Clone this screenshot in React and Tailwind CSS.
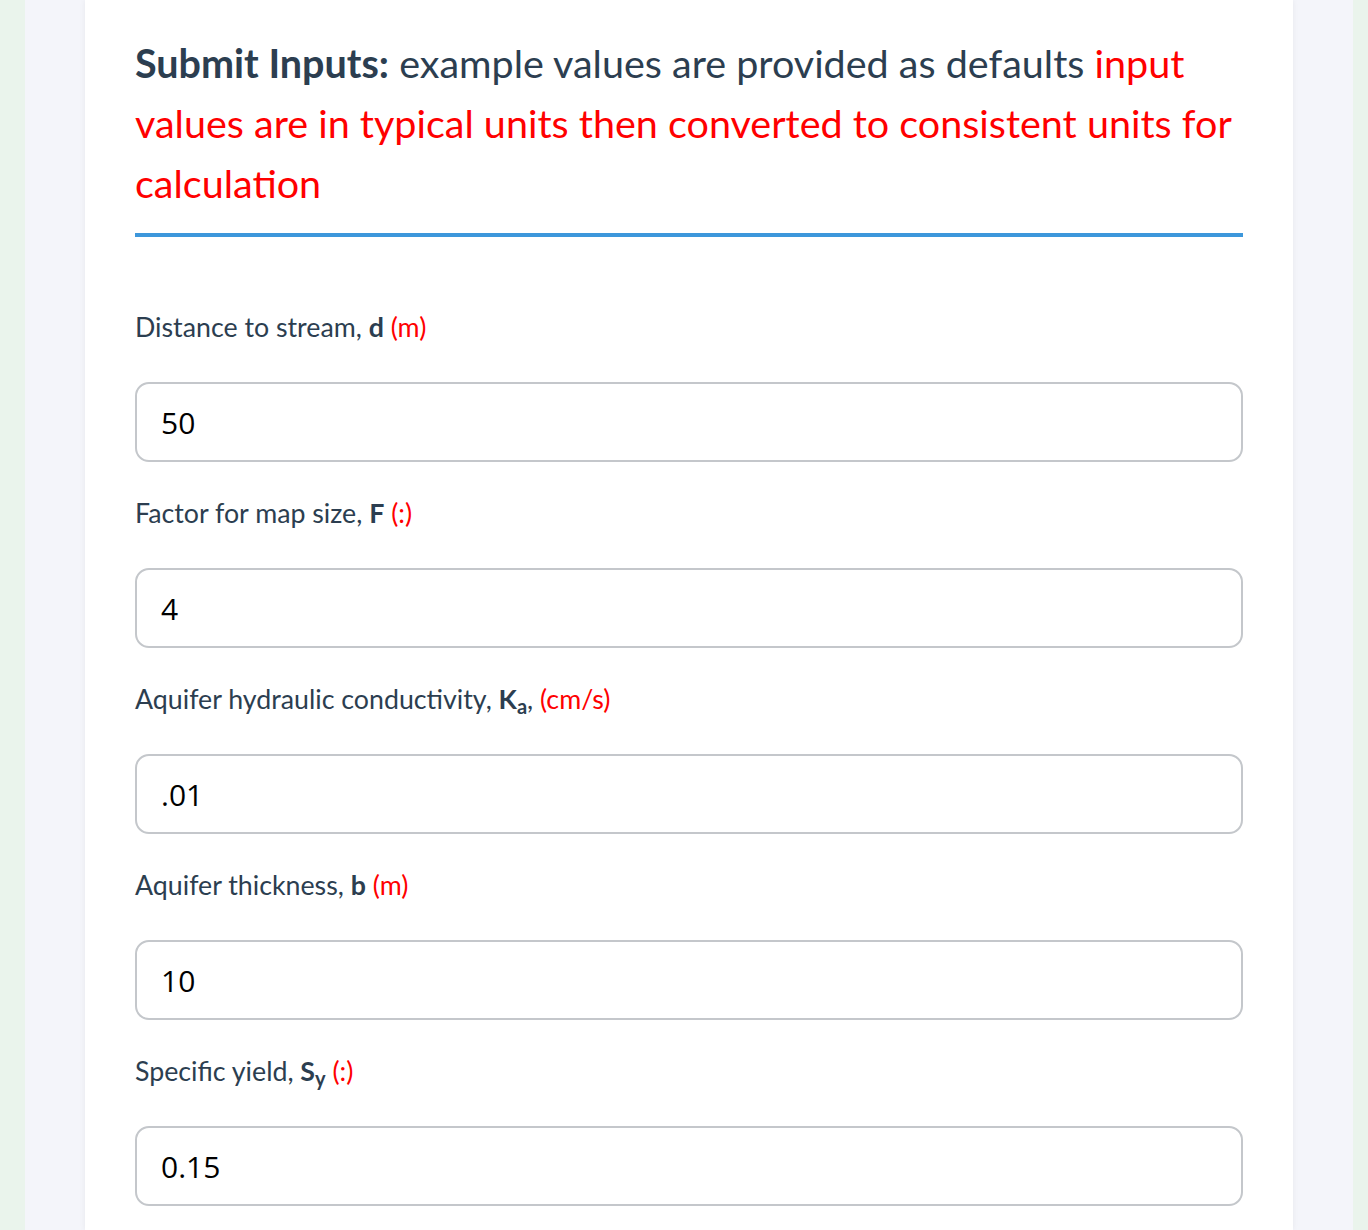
import React from 'react';

const fields = [
  { label: 'Distance to stream, ', sym: 'd', unit: '(m)', value: '50' },
  { label: 'Factor for map size, ', sym: 'F', unit: '(:)', value: '4' },
  { label: 'Aquifer hydraulic conductivity, ', sym: 'K', sub: 'a', comma: true, unit: '(cm/s)', value: '.01' },
  { label: 'Aquifer thickness, ', sym: 'b', unit: '(m)', value: '10' },
  { label: 'Specific yield, ', sym: 'S', sub: 'y', unit: '(:)', value: '0.15' },
];

const Field = ({ f }) => (
  <div className="mb-[33px]">
    <label className="block text-[26.75px] leading-[36px] text-[#2c3e50]">
      {f.label}
      <b className="font-bold">
        {f.sym}
        {f.sub && <sub>{f.sub}</sub>}
      </b>
      {f.comma ? ', ' : ' '}
      <span className="text-[#ff0000]">{f.unit}</span>
    </label>
    <input
      type="text"
      defaultValue={f.value}
      className="mt-[37px] block w-full h-[80px] rounded-[14px] border-2 border-[#c4c7cb] bg-white px-[24px] text-[30px] text-black font-['Open_Sans',sans-serif] outline-none"
    />
  </div>
);

export default function App() {
  return (
    <div className="min-h-[1230px] flex bg-[#eaf4ec] font-['Lato',sans-serif]">
      <div className="ml-[25px] mr-[15px] flex-1 bg-[#f4f5fa] px-[60px]">
        <div className="bg-white min-h-[1230px] shadow-[0_0_6px_rgba(0,0,0,0.06)] px-[50px] pt-[33px]">
          <h2 className="text-[39.5px] leading-[60px] text-[#2c3e50]">
            <b className="font-bold">Submit Inputs:</b> example values are provided as defaults{' '}
            <span className="text-[#ff0000]">
              input values are in typical units then converted to consistent units for calculation
            </span>
          </h2>
          <div className="mt-[20px] h-[4px] bg-[#3d97db]" />
          <div className="pt-[72px]">
            {fields.map((f) => (
              <Field key={f.label} f={f} />
            ))}
          </div>
        </div>
      </div>
    </div>
  );
}
